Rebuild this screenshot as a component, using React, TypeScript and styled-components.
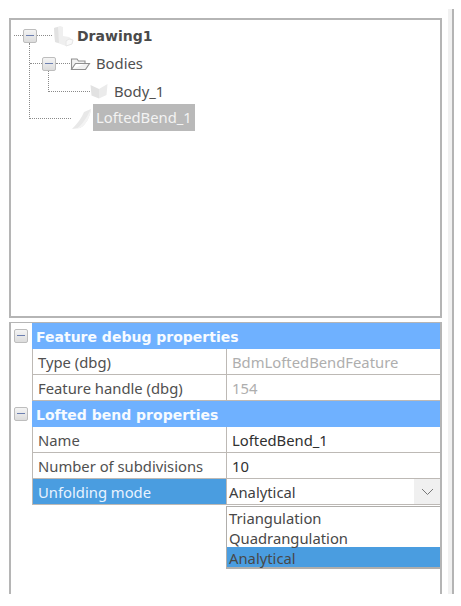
import React from "react";
import styled, { createGlobalStyle } from "styled-components";

const GlobalStyle = createGlobalStyle`
  html, body {
    margin: 0;
    padding: 0;
    background: #fff;
  }
  body {
    font-family: "Noto Sans", "DejaVu Sans", sans-serif;
  }
`;

const DrawingIcon = () => (
  <svg width="22" height="22" viewBox="0 0 22 22">
    <path d="M2 3 L8 1 L11 2 L11 11 L17 12 L21 15 L20 19 L14 21 L3 17 Z" fill="#efefef" />
    <path d="M2 3 L6 2 L7 18 L3 17 Z" fill="#e2e2e2" />
    <path d="M14 21 L20 19 L21 15 L17 14 L14 16 Z" fill="#f9f9f9" stroke="#e6e6e6" strokeWidth="1" />
  </svg>
);

const FolderIcon = () => (
  <svg width="21" height="14" viewBox="0 0 21 14">
    <path
      d="M1.5 12.5 V2 H7 L8.5 4 H15 V6.5 M1.5 12.5 H15.5 L19.5 6.5 H5.5 L1.5 12.5 Z"
      fill="#f1f1f1"
      stroke="#8f8f8f"
      strokeWidth="1.1"
    />
  </svg>
);

const BodyIcon = () => (
  <svg width="18" height="16" viewBox="0 0 18 16">
    <path d="M0.5 2 L9 6 L9 15.5 L1.5 12.5 Z" fill="#e2e2e2" />
    <path d="M17.5 1 L9 6 L9 15.5 L16.5 12 Z" fill="#ebebeb" />
  </svg>
);

const LoftIcon = () => (
  <svg width="21" height="22" viewBox="0 0 21 22">
    <path d="M20 1 L13 4 C11 9 7 15 1 21 L9 20 C15 17 19 9 20 1 Z" fill="#e8e8e8" />
    <path d="M20 1 C19 9 15 17 9 20 L6 20.5 C12 16 16 9 20 1 Z" fill="#f3f3f3" />
  </svg>
);

const Chevron = () => (
  <svg width="13" height="8" viewBox="0 0 13 8">
    <path d="M1 1 L6.5 6.5 L12 1" fill="none" stroke="#777" strokeWidth="1" />
  </svg>
);

const App = () => {
  return (
    <Page>
      <GlobalStyle />
      <Main>
        <TreePanel>
          <TreeRow $indent={3}>
            <Stub $width={9} />
            <Toggle $branch={76} />
            <Stub $width={15} />
            <IconSlot $width={25}>
              <DrawingIcon />
            </IconSlot>
            <NodeLabel $bold>Drawing1</NodeLabel>
          </TreeRow>
          <TreeRow $indent={19}>
            <Stub $width={12} />
            <Toggle $branch={21} />
            <Stub $width={14} />
            <IconSlot $width={26}>
              <FolderIcon />
            </IconSlot>
            <NodeLabel>Bodies</NodeLabel>
          </TreeRow>
          <TreeRow $indent={38}>
            <Stub $width={41} />
            <IconSlot $width={24}>
              <BodyIcon />
            </IconSlot>
            <NodeLabel>Body_1</NodeLabel>
          </TreeRow>
          <TreeRow $indent={19}>
            <Stub $width={41} />
            <IconSlot $width={22}>
              <LoftIcon />
            </IconSlot>
            <NodeLabel $selected>LoftedBend_1</NodeLabel>
          </TreeRow>
        </TreePanel>

        <PropsPanel>
          <HeaderRow>
            <Gutter>
              <Toggle />
            </Gutter>
            <HeaderTitle>Feature debug properties</HeaderTitle>
          </HeaderRow>
          <PropRow>
            <PropName>Type (dbg)</PropName>
            <PropValue $muted>BdmLoftedBendFeature</PropValue>
          </PropRow>
          <PropRow>
            <PropName>Feature handle (dbg)</PropName>
            <PropValue $muted>154</PropValue>
          </PropRow>
          <HeaderRow>
            <Gutter>
              <Toggle />
            </Gutter>
            <HeaderTitle>Lofted bend properties</HeaderTitle>
          </HeaderRow>
          <PropRow>
            <PropName>Name</PropName>
            <PropValue>LoftedBend_1</PropValue>
          </PropRow>
          <PropRow>
            <PropName>Number of subdivisions</PropName>
            <PropValue>10</PropValue>
          </PropRow>
          <PropRow>
            <PropName $active>Unfolding mode</PropName>
            <ComboCell>
              <ComboText>Analytical</ComboText>
              <ComboButton>
                <Chevron />
              </ComboButton>
              <DropList>
                <DropItem>Triangulation</DropItem>
                <DropItem>Quadrangulation</DropItem>
                <DropItem $selected>Analytical</DropItem>
              </DropList>
            </ComboCell>
          </PropRow>
        </PropsPanel>
      </Main>
      <ScrollStrip />
    </Page>
  );
};

const Page = styled.div`
  display: flex;
  align-items: flex-start;
  width: 461px;
  height: 606px;
  overflow: hidden;
  background: #fff;
`;

const Main = styled.div`
  display: flex;
  flex-direction: column;
  gap: 4px;
  box-sizing: border-box;
  width: 433px;
  height: 576px;
  margin: 18px 0 0 9px;
`;

const ScrollStrip = styled.div`
  box-sizing: border-box;
  width: 6px;
  height: 585px;
  margin: 9px 0 0 6px;
  background: #f1f1f1;
  border-right: 2px solid #b4b4b4;
`;

const TreePanel = styled.div`
  box-sizing: border-box;
  height: 300px;
  padding-top: 2px;
  border: 2px solid #b5b5b5;
`;

const TreeRow = styled.div<{ $indent: number }>`
  display: flex;
  align-items: center;
  height: 27.7px;
  padding-left: ${({ $indent }) => $indent}px;
`;

const Stub = styled.span<{ $width: number }>`
  flex: none;
  width: ${({ $width }) => $width}px;
  border-top: 1px dotted #8a8a8a;
`;

const Toggle = styled.span<{ $branch?: number }>`
  position: relative;
  flex: none;
  box-sizing: border-box;
  width: 14px;
  height: 14px;
  background: linear-gradient(#f4f4f4, #dcdcdc);
  border: 1px solid #bdbdbd;
  border-radius: 2px;

  &::before {
    content: "";
    position: absolute;
    left: 2px;
    right: 2px;
    top: 5px;
    height: 1px;
    background: #6c7fb0;
  }

  &::after {
    content: "";
    display: ${({ $branch }) => ($branch ? "block" : "none")};
    position: absolute;
    left: 5px;
    top: 13px;
    height: ${({ $branch }) => $branch}px;
    border-left: 1px dotted #8a8a8a;
  }
`;

const IconSlot = styled.span<{ $width: number }>`
  display: flex;
  align-items: center;
  flex: none;
  width: ${({ $width }) => $width}px;

  svg {
    display: block;
  }
`;

const NodeLabel = styled.span<{ $bold?: boolean; $selected?: boolean }>`
  display: flex;
  align-items: center;
  box-sizing: border-box;
  height: 27px;
  margin-bottom: 2px;
  padding: ${({ $bold, $selected }) =>
    $bold ? "3px 0 0" : $selected ? "0 3px 1px" : "1px 0 0"};
  font-family: ${({ $bold }) => ($bold ? '"DejaVu Sans", sans-serif' : "inherit")};
  font-size: ${({ $bold }) => ($bold ? "14px" : "14.8px")};
  font-weight: ${({ $bold }) => ($bold ? 700 : 400)};
  color: ${({ $selected, $bold }) =>
    $selected ? "#f3f3f3" : $bold ? "#4a4a4a" : "#505050"};
  background: ${({ $selected }) => ($selected ? "#b9b9b9" : "transparent")};
  white-space: nowrap;
`;

const PropsPanel = styled.div`
  flex: 1;
  box-sizing: border-box;
  border-top: 1px solid #b5b5b5;
  border-left: 2px solid #b5b5b5;
  border-right: 2px solid #b5b5b5;
  font-size: 14.8px;
`;

const HeaderRow = styled.div`
  display: flex;
  height: 26px;
`;

const Gutter = styled.div`
  display: flex;
  align-items: center;
  justify-content: center;
  flex: none;
  box-sizing: border-box;
  width: 21px;
  padding-right: 1px;
`;

const HeaderTitle = styled.div`
  display: flex;
  align-items: center;
  flex: 1;
  padding: 1px 0 0 4px;
  background: #6fb1ff;
  color: #f7fbff;
  font-family: "DejaVu Sans", sans-serif;
  font-weight: 700;
  font-size: 14px;
  white-space: nowrap;
`;

const PropRow = styled.div`
  display: grid;
  grid-template-columns: 194px 1fr;
  box-sizing: border-box;
  height: 26px;
  margin-left: 21px;
  border-left: 1px solid #bdb9b5;
  border-bottom: 1px solid #bdb9b5;
`;

const PropName = styled.div<{ $active?: boolean }>`
  display: flex;
  align-items: center;
  box-sizing: border-box;
  padding-left: 5px;
  border-right: 1px solid #bdb9b5;
  color: ${({ $active }) => ($active ? "#e8f3ff" : "#505050")};
  background: ${({ $active }) => ($active ? "#4a9de0" : "transparent")};
  white-space: nowrap;
`;

const PropValue = styled.div<{ $muted?: boolean }>`
  display: flex;
  align-items: center;
  padding-left: 5px;
  color: ${({ $muted }) => ($muted ? "#aeaeae" : "#303030")};
  white-space: nowrap;
`;

const ComboCell = styled.div`
  position: relative;
  display: flex;
  align-items: center;
  justify-content: space-between;
  padding-left: 2px;
`;

const ComboText = styled.span`
  color: #404040;
`;

const ComboButton = styled.span`
  display: flex;
  align-items: center;
  justify-content: center;
  align-self: stretch;
  width: 26px;
  background: #f0f0f0;
`;

const DropList = styled.div`
  position: absolute;
  top: 27px;
  left: -1px;
  right: 0;
  box-sizing: border-box;
  background: #fff;
  border: 1px solid #b0aeab;
  border-right: none;
  border-bottom-width: 2px;
`;

const DropItem = styled.div<{ $selected?: boolean }>`
  display: flex;
  align-items: center;
  box-sizing: border-box;
  height: 20px;
  padding: 1px 0 0 2px;
  color: #484848;
  background: ${({ $selected }) => ($selected ? "#4a9de0" : "transparent")};
`;

export default App;
